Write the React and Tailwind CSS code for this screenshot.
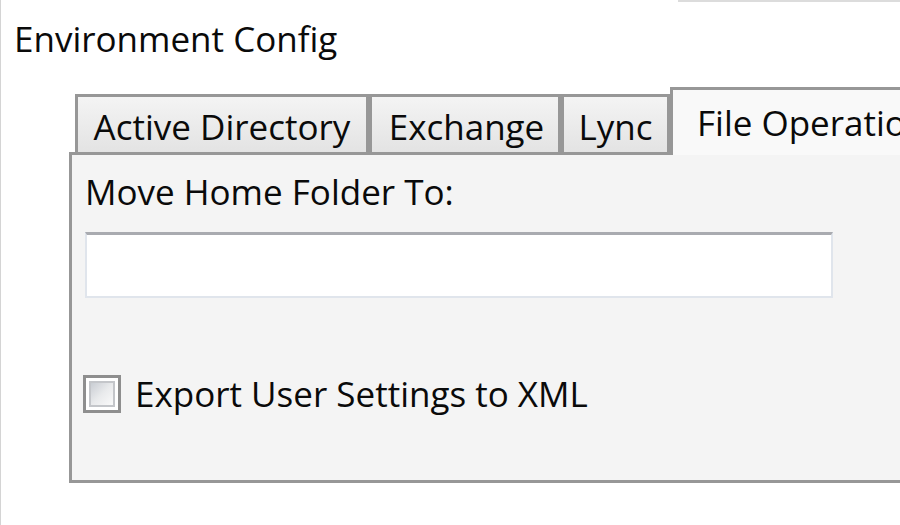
export default function App() {
  const font = { fontFamily: '"Open Sans", "Noto Sans", sans-serif' };
  return (
    <div
      className="w-[900px] h-[525px] bg-white border-l border-[#d4d4d4] overflow-hidden text-[35px] text-[#0a0a0a]"
      style={font}
    >
      <div className="flex justify-end">
        <div className="w-[222px] h-[2px] bg-[#dcdcdc]" />
      </div>
      <div className="mt-[19px] ml-[13px] leading-[36px] h-[36px] whitespace-nowrap">
        Environment Config
      </div>
      <div className="ml-[68px] mt-[30px] w-[1000px]">
        {/* tab strip */}
        <div className="flex items-end">
          <div className="w-[6px] h-[3px] bg-[#979797]" />
          <div className="w-[294px] h-[61px] box-border border-[3px] border-[#979797] bg-gradient-to-b from-[#f4f4f4] to-[#e3e3e3] flex justify-center pt-[12px] leading-[36px] whitespace-nowrap">
            Active Directory
          </div>
          <div className="w-[192px] h-[61px] box-border border-[3px] border-[#979797] bg-gradient-to-b from-[#f4f4f4] to-[#e3e3e3] flex justify-center pt-[12px] leading-[36px] whitespace-nowrap">
            <span className="ml-[3px]">Exchange</span>
          </div>
          <div className="w-[109px] h-[61px] box-border border-[3px] border-[#979797] bg-gradient-to-b from-[#f4f4f4] to-[#e3e3e3] flex justify-center pt-[12px] leading-[36px] whitespace-nowrap">
            Lync
          </div>
          <div className="w-[380px] h-[68px] box-border border-[3px] border-b-0 border-[#979797] bg-[#f9f9f9] pt-[15px] pl-[24px] leading-[36px] whitespace-nowrap">
            File Operations
          </div>
        </div>
        {/* panel */}
        <div className="h-[328px] box-border border-l-[3px] border-b-[3px] border-[#979797] bg-[#f4f4f4] pt-[19px] pl-[13px]">
          <div className="leading-[36px] h-[36px] whitespace-nowrap">Move Home Folder To:</div>
          <div className="mt-[22px] w-[748px] h-[66px] box-border bg-white border-[2px] border-[#e0e5ec] border-t-[3px] border-t-[#a9abb0]" />
          <div className="mt-[77px] flex items-center gap-[14px] -ml-[2px]">
            <div className="w-[38px] h-[38px] box-border border-[3px] border-[#8e8e8e] bg-white p-[3px]">
              <div className="w-full h-full box-border border-[2px] border-[#c4c6ca] bg-gradient-to-br from-[#c9cdd3] via-[#e9eaec] to-[#fafafa]" />
            </div>
            <div className="leading-[36px] whitespace-nowrap">Export User Settings to XML</div>
          </div>
        </div>
      </div>
    </div>
  );
}
